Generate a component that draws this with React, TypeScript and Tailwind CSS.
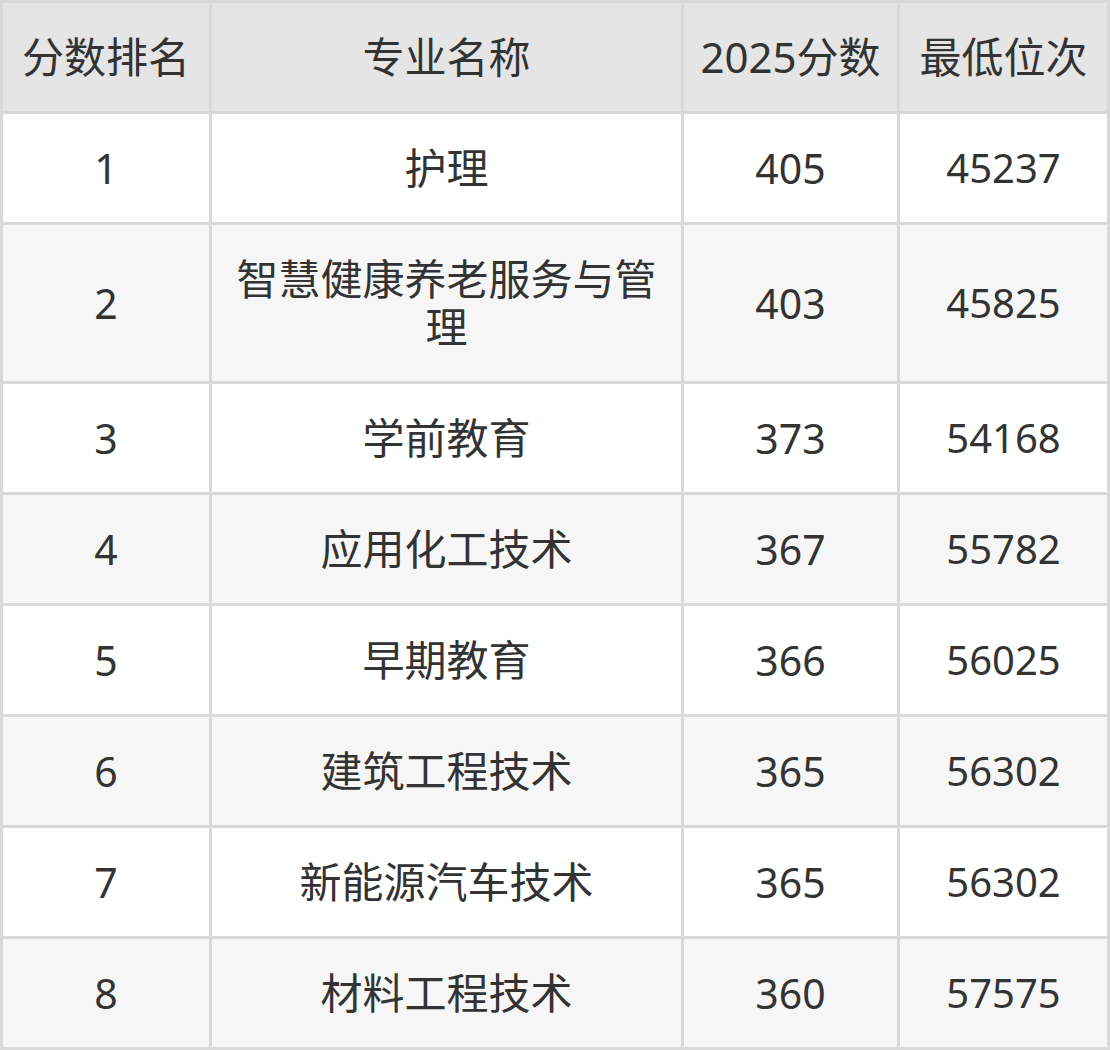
import * as React from "react";

const rows = [
  { rank: "1", name: "护理", score: "405", pos: "45237" },
  { rank: "2", name: "智慧健康养老服务与管理", score: "403", pos: "45825" },
  { rank: "3", name: "学前教育", score: "373", pos: "54168" },
  { rank: "4", name: "应用化工技术", score: "367", pos: "55782" },
  { rank: "5", name: "早期教育", score: "366", pos: "56025" },
  { rank: "6", name: "建筑工程技术", score: "365", pos: "56302" },
  { rank: "7", name: "新能源汽车技术", score: "365", pos: "56302" },
  { rank: "8", name: "材料工程技术", score: "360", pos: "57575" },
];

const cell = "border-[3px] border-[#d9d9d9] text-center align-middle px-4 py-[30px] leading-[48px]";

export default function App() {
  return (
    <div className="w-[1110px] bg-white text-[#333333] text-[42px] font-['Noto_Sans','Noto_Sans_CJK_SC',sans-serif]">
      <table className="w-[1110px] table-fixed border-collapse">
        <colgroup>
          <col className="w-[209px]" />
          <col className="w-[472px]" />
          <col className="w-[216px]" />
          <col />
        </colgroup>
        <thead>
          <tr className="bg-[#e5e5e5]">
            <th className={`${cell} font-normal px-0`}>分数排名</th>
            <th className={`${cell} font-normal`}>专业名称</th>
            <th className={`${cell} font-normal px-0`}>2025分数</th>
            <th className={`${cell} font-normal px-0`}>最低位次</th>
          </tr>
        </thead>
        <tbody>
          {rows.map((r, i) => (
            <tr key={r.rank} className={i % 2 === 0 ? "bg-white" : "bg-[#f6f6f6]"}>
              <td className={`${cell} text-[41px]`}>{r.rank}</td>
              <td className={cell}>{r.name}</td>
              <td className={`${cell} text-[41px]`}>{r.score}</td>
              <td className={`${cell} text-[40px]`}>{r.pos}</td>
            </tr>
          ))}
        </tbody>
      </table>
    </div>
  );
}
